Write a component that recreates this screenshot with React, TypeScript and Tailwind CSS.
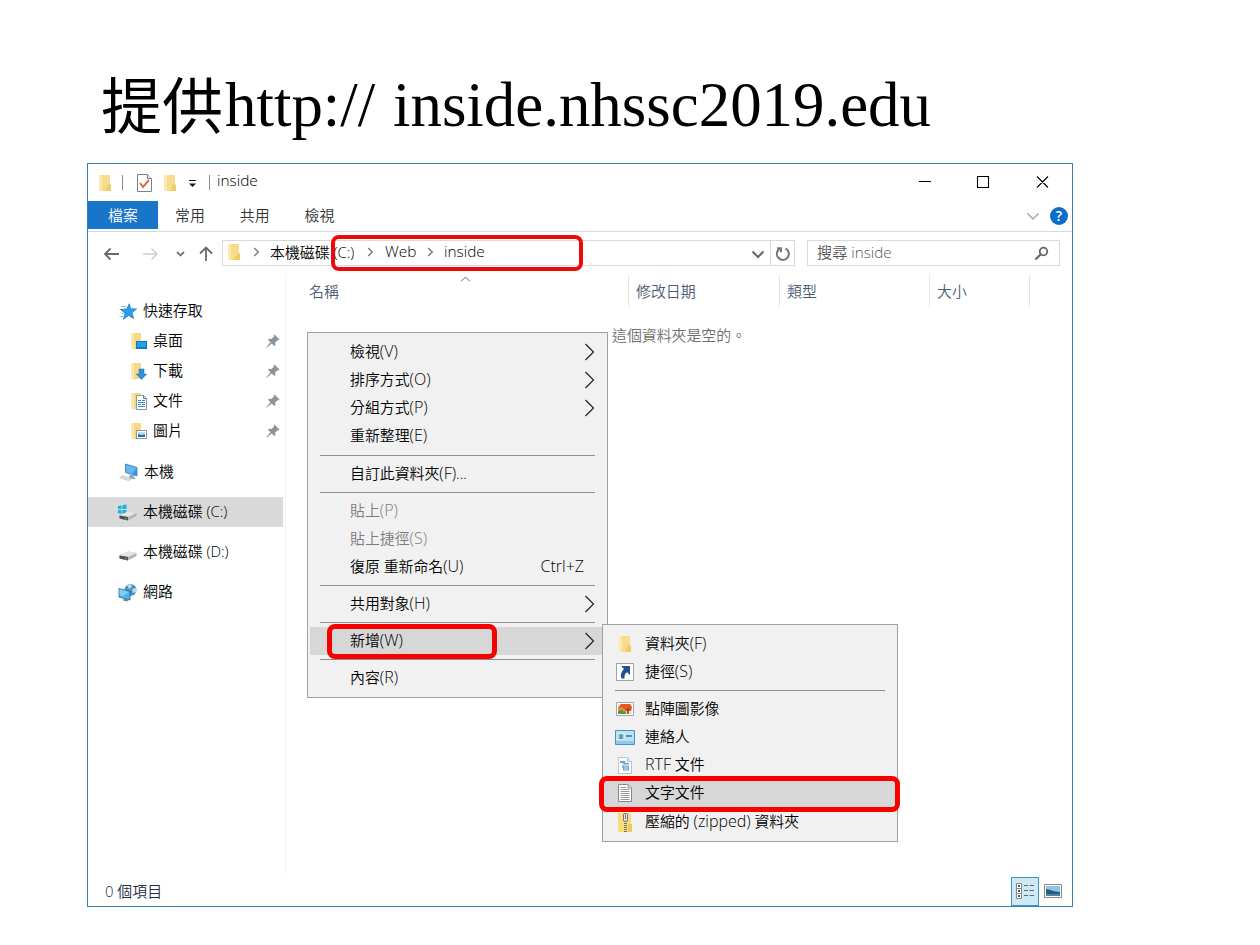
import React from "react";

type P = { className?: string };

const Folder = ({ className = "" }: P) => (
  <svg className={"shrink-0 " + className} width="14" height="18" viewBox="0 0 14 18">
    <path d="M1 1h11v16H1z" fill="#f9dc8b" />
    <path d="M1 1h3v16H1z" fill="#fbe8b2" />
    <path d="M10 10.500h3V17H7z" fill="#f2cb69" />
  </svg>
);

const Chevron = ({ className = "" }: P) => (
  <svg className={"shrink-0 " + className} width="7" height="10" viewBox="0 0 7 10" fill="none" stroke="#7b7b7b" strokeWidth="1.500">
    <path d="M1.200 1l4 4-4 4" />
  </svg>
);

const ChevronDown = ({ className = "" }: P) => (
  <svg className={"shrink-0 " + className} width="14" height="9" viewBox="0 0 14 9" fill="none" stroke="currentColor">
    <path d="M1.500 1.500L7 7l5.500-5.500" />
  </svg>
);

const Pin = () => (
  <svg className="mr-[3px] shrink-0" width="14" height="14" viewBox="0 0 14 14">
    <path d="M8.500.5l5 5-1 1-1-.3-2.300 2.400.2 2.400-1.100 1L5.700 9.500 1 13.500l-.7.2.2-.8 4-4.600L2 5.800l1-1.100 2.500.2L8 2.500l-.4-1z" fill="#8a949c" />
  </svg>
);

const HalfFolder = ({ children }: { children: React.ReactNode }) => (
  <svg className="shrink-0" width="18" height="19" viewBox="0 0 18 19">
    <path d="M1 1h10v9l1 1v6H1z" fill="#f7d985" />
    <path d="M1 1h3v17l-3-1z" fill="#fbe9b4" />
    {children}
  </svg>
);

const Desktop = () => (
  <HalfFolder>
    <rect x="6.500" y="9.500" width="10" height="7" fill="#1ea0ee" stroke="#1878bd" />
    <path d="M7 15.500h9" stroke="#0c5b94" strokeDasharray="1 1" />
  </HalfFolder>
);
const Download = () => (
  <HalfFolder>
    <path d="M9 7h5v5h2.700L11.500 17.500 6.200 12H9z" fill="#2f8fd8" stroke="#2b78b5" strokeWidth=".6" />
  </HalfFolder>
);
const Docs = () => (
  <HalfFolder>
    <path d="M6.500 3.500h7l3 3v11h-10z" fill="#fff" stroke="#8b98a3" />
    <path d="M13.500 3.500v3h3M8 8.500h3M12 8.500h3M8 10.500h7M8 12.500h3M12 12.500h3M8 14.500h7" fill="none" stroke="#3b86bd" />
  </HalfFolder>
);
const Pictures = () => (
  <HalfFolder>
    <rect x="6.500" y="8.500" width="10" height="8" fill="#fff" stroke="#8b98a3" />
    <path d="M8 10h7v5H8z" fill="#b8dbf2" />
    <path d="M8 12l3 1 4-.5V15H8z" fill="#2c6c9b" />
  </HalfFolder>
);
const Star = () => (
  <svg className="shrink-0" width="19" height="17" viewBox="0 0 19 17">
    <path d="M2 3.500h5M.5 6.500h4M3 10.500h3M.5 13.500h4" stroke="#7cc0ef" />
    <path d="M10.200.8l1.600 5 5.700.2-4.500 3.600 1.600 5.900-4.900-3-5.300 3.700 1.900-5.900L1.500 6.500l6.300-.5z" fill="#2d9be8" stroke="#1a7fc9" strokeWidth=".8" />
  </svg>
);
const Computer = () => (
  <svg className="shrink-0" width="20" height="18" viewBox="0 0 20 18">
    <path d="M6.500 1l11.500 3.500v8.500L6.500 9.500z" fill="#3398df" stroke="#4b7fa6" strokeWidth=".8" />
    <path d="M7 1.700l10.500 3.200-4.500 6L7 9z" fill="#62b9f1" />
    <path d="M11 11.500l4 1.200v2l2 .8-2 .8-5-1.500z" fill="#8da5b8" />
    <path d="M.7 14.500l3-1.700 9 3-3 1.900z" fill="#dfe3e6" stroke="#a9b0b6" strokeWidth=".6" />
  </svg>
);
const Drive = ({ win = false }: { win?: boolean }) => (
  <svg className="shrink-0" width="20" height="18" viewBox="0 0 20 18">
    {win && <path d="M0 3l3.600-.6v3.700H0zM4.400 2.300l4.100-.7v4.500H4.400zM0 6.900h3.600v3.800L0 10.100zM4.400 6.900h4.100v4.600l-4.100-.7z" fill="#12b4e6" />}
    <path d="M1.500 12.500L10 8.500l8.500 1.500v3L10 17.500l-8.500-2z" fill="#b6b6b6" />
    <path d="M1.500 12.500L10 8.500l8.500 1.500L10 14z" fill="#e6e6e6" />
    <path d="M1.500 12.500l8.500 1.500v3.500l-8.500-2z" fill="#4f4f4f" />
    <path d="M7 15.500l1.500.3" stroke="#63e06d" />
  </svg>
);
const Network = () => (
  <svg className="shrink-0" width="20" height="19" viewBox="0 0 20 19">
    <circle cx="12.500" cy="7" r="6" fill="#4b91bd" />
    <path d="M9 2l4-1 1 3-3 2zM14 6l4-1v4l-3 1z" fill="#b8d9e8" />
    <path d="M1 5.500l11 3v8.500l-11-3z" fill="#4bb3f0" stroke="#2a6f9f" strokeWidth=".9" />
    <path d="M1.500 6.200L11 9l-6 4-3.500-1z" fill="#83cef7" />
    <path d="M6 15.500v1l-2 .6 5 1.400 1.500-.8-1.500-.6v-.8z" fill="#6b8192" />
  </svg>
);

const Shortcut = () => (
  <svg width="18" height="18" viewBox="0 0 18 18">
    <path d="M.5.500h17v17H.5z" fill="#fff" stroke="#9aa3ab" />
    <path d="M5 3h9v9l-2.800-2.800C9 10.500 8.200 12.500 8.500 15.500H5.500C4 12 5.500 8.500 8 6z" fill="#234f8d" />
  </svg>
);
const Bitmap = () => (
  <svg width="18" height="14" viewBox="0 0 18 14">
    <path d="M.5.500h17v13H.5z" fill="#fff" stroke="#a5a5a5" />
    <path d="M2 2h14v10H2z" fill="#f5e3c8" />
    <path d="M5 2h9l2 3-1 4H7L2 6z" fill="#de5a28" />
    <path d="M2 6l4-1 4 4-2 3H2z" fill="#ef8a3a" />
    <path d="M2 9l4-1 2 2 2-1v3H2z" fill="#4d9a47" />
    <path d="M12 6v6" stroke="#7b3a1d" strokeWidth="1.500" />
  </svg>
);
const Contact = () => (
  <svg width="20" height="15" viewBox="0 0 20 15">
    <path d="M.5.500h19v14H.5z" fill="#bfe1f5" stroke="#4d91b8" />
    <path d="M1 11h18v3H1z" fill="#8cc9ec" />
    <path d="M3 3.500h6v6H3z" fill="#8fb7cf" stroke="#f2f9fd" strokeWidth=".7" />
    <circle cx="6" cy="5.700" r="1.300" fill="#5b8cab" />
    <path d="M4 9c.5-2.300 3.500-2.300 4 0z" fill="#5b8cab" />
    <path d="M11 6h6" stroke="#4a93c2" strokeWidth="2" />
  </svg>
);
const Rtf = () => (
  <svg width="14" height="17" viewBox="0 0 14 17">
    <path d="M.5.500h9l4 4v12H.5z" fill="#fafcfd" stroke="#b9c4cc" />
    <path d="M9.500.500v4h4" fill="#dfe7ec" stroke="#b9c4cc" />
    <path d="M2 4h5v2h4v1.500H5V6H2zM4 8.500h7v5H5v-3H4z" fill="#6ba3cf" />
    <path d="M6 10h4M6 12h4" stroke="#d3e6f4" />
  </svg>
);
const TextDoc = () => (
  <svg width="14" height="18" viewBox="0 0 14 18">
    <path d="M.5.500h9.500l3.500 3.500v13.500H.5z" fill="#fff" stroke="#888" />
    <path d="M10 .5V4h3.500M2.500 3.500h6M2.500 5.500h9M2.500 7.500h9M2.500 9.500h9M2.500 11.500h9M2.500 13.500h9M2.500 15.500h9" fill="none" stroke="#999" />
  </svg>
);
const Zip = () => (
  <svg width="14" height="19" viewBox="0 0 14 19">
    <path d="M0 0h13v11h1v8H0z" fill="#f8dc80" />
    <path d="M10 11h4v8h-4z" fill="#f0c85c" />
    <path d="M7.500 8v11" stroke="#77705a" strokeWidth="3" strokeDasharray="1 1" />
    <rect x="5.500" y=".5" width="4" height="8" rx="1.500" fill="#e3e3e3" stroke="#777" />
    <path d="M7.500 2v4" stroke="#777" />
  </svg>
);

const NavRow = ({ icon, label, className, pin }: { icon: React.ReactNode; label: string; className: string; pin?: boolean }) => (
  <div className={"flex h-[30px] w-[195px] items-center " + className}>
    {icon}
    <span className="ml-[5px] flex-1 pb-[2px] whitespace-pre">{label}</span>
    {pin && <Pin />}
  </div>
);

const Label = ({ text }: { text: string }) => (
  <span className="whitespace-pre">
    {text.split(/(\([A-Za-z]+\)|RTF)/).map((part, i) =>
      i % 2 ? (
        <span key={i} className="text-[16px]">{part}</span>
      ) : (
        part
      )
    )}
  </span>
);

const MenuItem = ({ label, arrow, hot, disabled, keys }: { label: string; arrow?: boolean; hot?: boolean; disabled?: boolean; keys?: string }) => (
  <div className={"ml-[2px] flex h-7 items-center pr-[12px] pl-[40px] " + (hot ? "bg-[#d7d7d7] " : "") + (disabled ? "text-[#7d7d7d]" : "text-black")}>
    <span className="flex-1 pb-[2px]"><Label text={label} /></span>
    {keys && <span className="mr-[11px] pb-[2px] text-[16px]">{keys}</span>}
    {arrow && (
      <svg width="11" height="18" viewBox="0 0 11 18" fill="none" stroke="#222" strokeWidth="1.200">
        <path d="M1.500 1l8 8-8 8" />
      </svg>
    )}
  </div>
);
const Sep = ({ className = "h-[9px]" }: P) => (
  <div className={"flex items-center pr-[12px] pl-[12px] " + className}>
    <div className="h-px w-full bg-[#8f8f8f]" />
  </div>
);
const SubItem = ({ icon, label, hot }: { icon: React.ReactNode; label: string; hot?: boolean }) => (
  <div className={"flex h-7 items-center " + (hot ? "bg-[#d7d7d7]" : "")}>
    <span className="flex w-[44px] justify-center">{icon}</span>
    <span className="-ml-[2px] pb-[2px]"><Label text={label} /></span>
  </div>
);

const Column = ({ label, className }: { label: string; className: string }) => (
  <div className={"flex h-[32px] items-center border-r border-[#e4e4e4] text-[#4b5b74] " + className}>{label}</div>
);

export default function App() {
  return (
    <div className="relative h-[945px] w-[1260px] overflow-hidden bg-white pl-[87px] font-['Open_Sans','Noto_Sans_CJK_TC',sans-serif] text-[14.900px] leading-[20px] font-[350] text-black">
      <h1 className="flex h-[163px] items-start pt-[69px] pl-[14px] font-['Liberation_Serif','Noto_Sans_CJK_TC',serif] text-[62.900px] leading-[72px] font-normal whitespace-pre">
        <span className="w-[124px] pt-[4px] text-[61px] font-normal">提供</span>
        <span className="[word-spacing:2px]">http:// inside.nhssc2019.edu</span>
      </h1>

      <div className="flex h-[744px] w-[986px] flex-col border border-[#3580b5] bg-white">
        <div className="flex h-[37px] shrink-0 items-center pl-[10px]">
          <Folder />
          <div className="ml-[10px] h-[15px] w-px bg-[#8a8a8a]" />
          <svg className="ml-[14px]" width="15" height="18" viewBox="0 0 15 18">
            <path d="M.5.500h10l4 4v13H.5z" fill="#fff" stroke="#777f88" />
            <path d="M10.500.500v4h4" fill="#eee" stroke="#777f88" />
            <path d="M3 9l3 4 6-7" fill="none" stroke="#dc6b35" strokeWidth="2" />
          </svg>
          <Folder className="ml-[11px]" />
          <svg className="mt-[3px] ml-[12px]" width="7" height="8" viewBox="0 0 7 8">
            <path d="M0 .5h7" stroke="#111" />
            <path d="M0 3.500h7L3.500 7z" fill="#111" />
          </svg>
          <div className="ml-[13px] h-[15px] w-px bg-[#8a8a8a]" />
          <span className="ml-[7px] pb-[3px] text-[15.400px]">inside</span>
          <div className="ml-auto flex items-center pr-[23px]">
            <svg width="130" height="13" viewBox="0 0 130 13" fill="none" stroke="#000" strokeWidth="1.100">
              <path d="M0 5.500h12M58.500.500h11v11h-11zM118 .5l11 11M129 .5l-11 11" />
            </svg>
          </div>
        </div>

        <div className="flex h-[31px] shrink-0 border-b border-[#d9dadb] text-[#333]">
          <div className="flex h-[28px] w-[70px] items-center justify-center bg-[#1975c7] text-white">檔案</div>
          <div className="flex h-[28px] items-center pl-[17px]">常用</div>
          <div className="flex h-[28px] items-center pl-[35px]">共用</div>
          <div className="flex h-[28px] items-center pl-[35px]">檢視</div>
          <div className="ml-auto flex h-[30px] items-center pr-[4px]">
            <ChevronDown className="mr-[10px] text-[#a5a5a5] [stroke-width:1.5]" />
            <span className="flex size-[18px] items-center justify-center rounded-full bg-[#0b6fc8] text-[14px] font-semibold text-white">?</span>
          </div>
        </div>

        <div className="flex h-[43px] shrink-0 pt-[8px]">
          <svg className="ml-[15px]" width="112" height="26" viewBox="0 0 112 26" fill="none">
            <path d="M16 14H2M7.500 8.500L2 14l5.500 5.500" stroke="#6b6b6b" strokeWidth="1.800" />
            <path d="M40 14h14M48.500 8.500L54 14l-5.500 5.500" stroke="#d0d0d0" strokeWidth="1.500" />
            <path d="M74 12l3.500 3.500L81 12" stroke="#777" strokeWidth="1.800" />
            <path d="M103 21V8M97 13.500L103 7.500l6 6" stroke="#6b6b6b" strokeWidth="1.800" />
          </svg>
          <div className="ml-[7px] flex h-[26px] w-[573px] items-center border border-[#d9d9d9]">
            <Folder className="mb-[2px] ml-[4px]" />
            <Chevron className="mb-[3px] ml-[12px]" />
            <span className="ml-[10px] w-[87px] pb-[3px] whitespace-pre">本機磁碟 (C:)</span>
            <Chevron className="mb-[3px] ml-[10px]" />
            <span className="ml-[11px] w-[33px] pb-[3px] text-[15.400px]">Web</span>
            <Chevron className="mb-[3px] ml-[9px]" />
            <span className="ml-[10px] pb-[3px] text-[15.400px]">inside</span>
            <ChevronDown className="mt-[2px] ml-auto text-[#666] [stroke-width:2]" />
            <div className="ml-[5px] flex h-[24px] w-[24px] items-center justify-center border-l border-[#d9d9d9]">
              <svg className="mt-[2px]" width="16" height="16" viewBox="0 0 16 16" fill="none" stroke="#777" strokeWidth="2">
                <path d="M10.500 2.500a6 6 0 1 1-5.500.1M2 2.200h4v4" />
              </svg>
            </div>
          </div>
          <div className="ml-[12px] flex h-[26px] w-[253px] items-center border border-[#d9d9d9] pr-[10px] pl-[9px] text-[#555]">
            <span className="flex-1 pb-[2px] text-[15.200px]">搜尋 inside</span>
            <svg className="mt-[1px]" width="15" height="15" viewBox="0 0 15 15" fill="none" stroke="#666">
              <circle cx="9.500" cy="5.500" r="3.800" strokeWidth="1.800" />
              <path d="M6.500 8.500L1.500 13.500" strokeWidth="2.200" />
            </svg>
          </div>
        </div>

        <div className="flex h-[599px] shrink-0">
          <div className="w-[198px] shrink-0 border-r border-[#f4f4f4] pt-[21px]">
            <NavRow className="pl-[31px]" icon={<Star />} label="快速存取" />
            <NavRow className="pl-[42px]" icon={<Desktop />} label="桌面" pin />
            <NavRow className="pl-[42px]" icon={<Download />} label="下載" pin />
            <NavRow className="pl-[42px]" icon={<Docs />} label="文件" pin />
            <NavRow className="pl-[42px]" icon={<Pictures />} label="圖片" pin />
            <NavRow className="mt-[11px] pl-[31px]" icon={<Computer />} label="本機" />
            <NavRow className="mt-[10px] bg-[#d9d9d9] pl-[30px]" icon={<Drive win />} label="本機磁碟 (C:)" />
            <NavRow className="mt-[10px] pl-[30px]" icon={<Drive />} label="本機磁碟 (D:)" />
            <NavRow className="mt-[10px] pl-[30px]" icon={<Network />} label="網路" />
          </div>
          <div className="flex-1">
            <div className="flex">
              <Column className="w-[343px] pl-[23px]" label="名稱" />
              <Column className="w-[151px] pl-[7px]" label="修改日期" />
              <Column className="w-[150px] pl-[7px]" label="類型" />
              <Column className="w-[100px] pl-[7px]" label="大小" />
            </div>
            <div className="pt-[18px] pl-[326px] text-[#6d6d6d]">這個資料夾是空的。</div>
          </div>
        </div>

        <div className="flex flex-1 items-center pl-[17px] text-[#1d2d45]">
          <span className="flex-1 pt-[1px]">0 個項目</span>
          <div className="mt-[2px] flex h-[29px] w-[28px] items-center justify-center border border-[#3c96c4] bg-[#cfe8f6]">
            <svg width="19" height="17" viewBox="0 0 19 17" fill="none">
              <path d="M.5.500h5v5h-5zM.5 5.500h5v5h-5zM.5 10.500h5v5h-5z" fill="#fff" stroke="#888" />
              <path d="M2 3h2M2 8h2M2 13h2" stroke="#555" strokeWidth="2" />
              <path d="M8 2.500h4M13.500 2.500h4.500M8 7.500h4M13.500 7.500h4.500M8 12.500h4M13.500 12.500h4.500" stroke="#5b6b78" />
            </svg>
          </div>
          <svg className="mt-[1px] mr-[10px] ml-[5px]" width="18" height="14" viewBox="0 0 18 14">
            <path d="M.5.500h17v13H.5z" fill="#fff" stroke="#888" />
            <path d="M2 2h14v10H2z" fill="#8ec5ee" />
            <path d="M2 5c4 0 7 3 14 3v2H2z" fill="#2d5f6b" />
            <path d="M2 10h14v2H2z" fill="#4786bd" />
          </svg>
        </div>
      </div>

      <svg className="absolute top-[276px] left-[460px]" width="11" height="6" viewBox="0 0 11 6" fill="none" stroke="#666">
        <path d="M1 5.500L5.500 1 10 5.500" />
      </svg>

      <div className="absolute top-[332px] left-[307px] h-[366px] w-[301px] border border-[#a0a0a0] bg-[#f1f1f1] pt-[5px]">
        <MenuItem label="檢視(V)" arrow />
        <MenuItem label="排序方式(O)" arrow />
        <MenuItem label="分組方式(P)" arrow />
        <MenuItem label="重新整理(E)" />
        <Sep className="h-[10px]" />
        <MenuItem label="自訂此資料夾(F)..." />
        <Sep />
        <MenuItem label="貼上(P)" disabled />
        <MenuItem label="貼上捷徑(S)" disabled />
        <MenuItem label="復原 重新命名(U)" keys="Ctrl+Z" />
        <Sep />
        <MenuItem label="共用對象(H)" arrow />
        <Sep />
        <MenuItem label="新增(W)" arrow hot />
        <Sep />
        <MenuItem label="內容(R)" />
      </div>

      <div className="absolute top-[624px] left-[602px] h-[218px] w-[296px] border border-[#a0a0a0] bg-[#f1f1f1] pt-[5px]">
        <SubItem icon={<Folder />} label="資料夾(F)" />
        <SubItem icon={<Shortcut />} label="捷徑(S)" />
        <Sep />
        <SubItem icon={<Bitmap />} label="點陣圖影像" />
        <SubItem icon={<Contact />} label="連絡人" />
        <SubItem icon={<Rtf />} label="RTF 文件" />
        <SubItem icon={<TextDoc />} label="文字文件" hot />
        <div className="pt-px">
          <SubItem icon={<Zip />} label="壓縮的 (zipped) 資料夾" />
        </div>
      </div>

      <div className="absolute top-[235px] left-[331px] h-[36px] w-[252px] rounded-[8px] border-4 border-[#ee0808]" />
      <div className="absolute top-[624px] left-[327px] h-[35px] w-[170px] rounded-[8px] border-[5px] border-[#f60000]" />
      <div className="absolute top-[776px] left-[599px] h-[36px] w-[301px] rounded-[8px] border-[5px] border-[#f60000]" />
    </div>
  );
}
